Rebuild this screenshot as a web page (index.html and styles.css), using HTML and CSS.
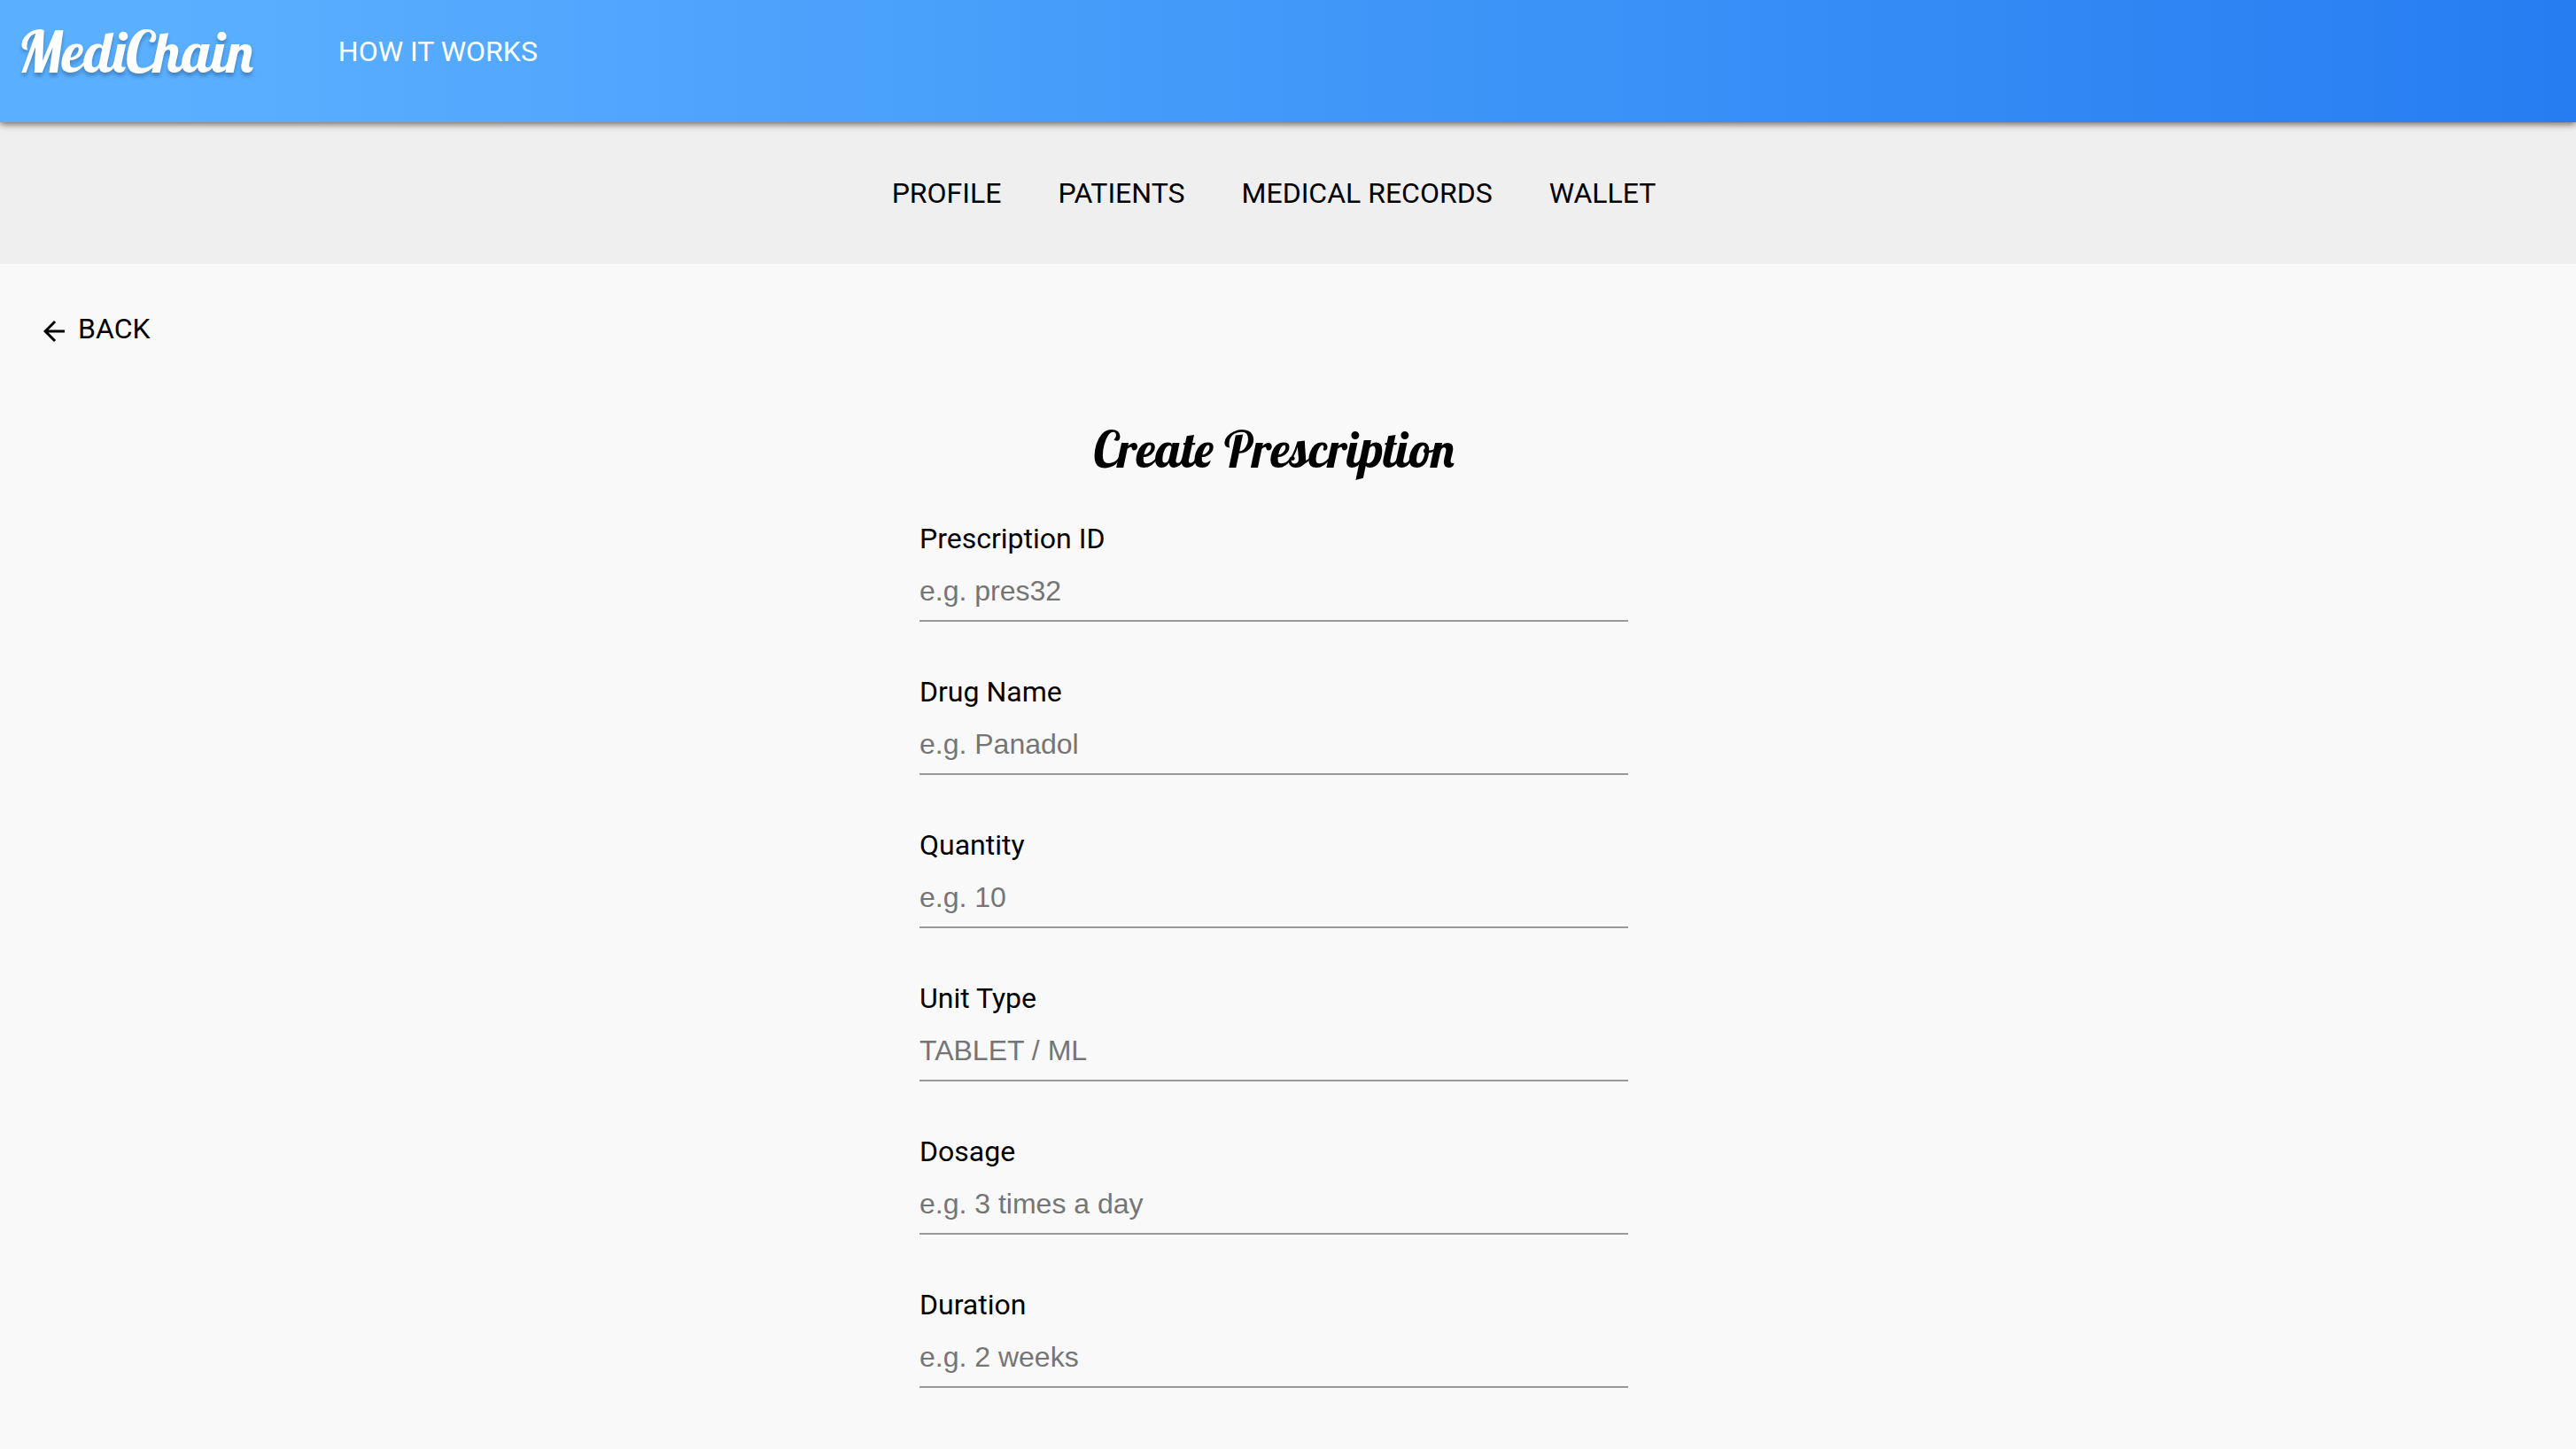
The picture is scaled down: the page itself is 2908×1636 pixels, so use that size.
FILE: index.html
```html
<!DOCTYPE html>
<html lang="en">
<head>
<meta charset="utf-8">
<meta name="viewport" content="width=device-width, initial-scale=1">
<title>MediChain - Create Prescription</title>
<link rel="stylesheet" href="styles.css">
</head>
<body>
<header class="topbar">
  <a class="logo" href="#">MediChain</a>
  <a class="topbar-link" href="#">HOW IT WORKS</a>
</header>
<nav class="subnav">
  <a href="#">PROFILE</a>
  <a href="#">PATIENTS</a>
  <a href="#">MEDICAL RECORDS</a>
  <a href="#">WALLET</a>
</nav>
<main class="page">
  <a class="back" href="#">
    <svg class="back-icon" viewBox="0 0 24 24" aria-hidden="true"><path d="M20 11H7.83l5.59-5.59L12 4l-8 8 8 8 1.41-1.41L7.83 13H20v-2z"/></svg>
    BACK
  </a>
  <form class="form">
    <h1 class="title">Create Prescription</h1>
    <div class="field">
      <label for="prescription-id">Prescription ID</label>
      <input id="prescription-id" type="text" placeholder="e.g. pres32">
    </div>
    <div class="field">
      <label for="drug-name">Drug Name</label>
      <input id="drug-name" type="text" placeholder="e.g. Panadol">
    </div>
    <div class="field">
      <label for="quantity">Quantity</label>
      <input id="quantity" type="text" placeholder="e.g. 10">
    </div>
    <div class="field">
      <label for="unit-type">Unit Type</label>
      <input id="unit-type" type="text" placeholder="TABLET / ML">
    </div>
    <div class="field">
      <label for="dosage">Dosage</label>
      <input id="dosage" type="text" placeholder="e.g. 3 times a day">
    </div>
    <div class="field">
      <label for="duration">Duration</label>
      <input id="duration" type="text" placeholder="e.g. 2 weeks">
    </div>
  </form>
</main>
</body>
</html>
```
FILE: styles.css
```css
* {
  box-sizing: border-box;
}

body {
  margin: 0;
  background: #f9f9f9;
  color: #000;
  font-family: Roboto, sans-serif;
  font-size: 32px;
  line-height: 38px;
}

a {
  color: inherit;
  text-decoration: none;
}

.topbar {
  position: relative;
  display: flex;
  align-items: center;
  gap: 96px;
  padding: 20px 20px 42px;
  background: linear-gradient(to right, #5ab0ff, #5ab0ff 6%, #267df1);
  box-shadow: 0 2px 8px rgba(0, 0, 0, 0.6);
  color: #fff;
}

.logo {
  font-family: Lobster, "Liberation Serif", serif;
  font-size: 64px;
  font-weight: 400;
  line-height: 76px;
  text-shadow: 0 4px 4px rgba(0, 0, 0, 0.25);
}

.subnav {
  display: flex;
  justify-content: center;
  gap: 64px;
  padding: 61px 32px 61px 0;
  background: #efefef;
}

.page {
  padding: 52px 32px 0 0;
}

.back {
  display: inline-flex;
  align-items: center;
  gap: 9px;
  margin-left: 43px;
}

.back-icon {
  width: 36px;
  height: 36px;
  margin-top: 6px;
}

.form {
  width: 100%;
  max-width: 800px;
  margin: 69px auto 0;
}

.title {
  margin: 0 0 44px;
  font-family: Lobster, "Liberation Serif", serif;
  font-size: 56px;
  font-weight: 400;
  line-height: 76px;
  text-align: center;
}

.field {
  display: flex;
  flex-direction: column;
  margin-bottom: 60px;
}

.field input {
  width: 100%;
  padding: 22px 0 14px;
  border: 0;
  border-bottom: 2px solid #999;
  background: transparent;
  font-family: "Liberation Sans", Arial, sans-serif;
  font-size: 32px;
  line-height: 37px;
  outline: none;
}

.field input::placeholder {
  color: #757575;
  opacity: 1;
}
```
